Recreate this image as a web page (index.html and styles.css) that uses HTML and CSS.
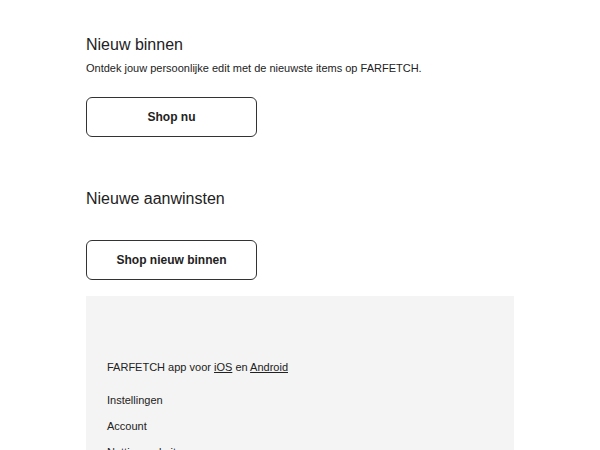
FILE: index.html
```html
<!DOCTYPE html>
<html>
<head>
  <link rel="stylesheet" href="styles.css">
</head>
<body>
  <div class="mail">
    <div class="block block-first">
      <h2 class="block-title">Nieuw binnen</h2>
      <p class="block-text">Ontdek jouw persoonlijke edit met de nieuwste items op FARFETCH.</p>
      <a class="shop-button" href="#">Shop nu</a>
    </div>

    <div class="block block-second">
      <h2 class="block-title">Nieuwe aanwinsten</h2>
      <a class="shop-button" href="#">Shop nieuw binnen</a>
    </div>

    <div class="footer">
      <p class="app-line">FARFETCH app voor <a href="#">iOS</a> en <a href="#">Android</a></p>
      <ul class="footer-links">
        <li><a href="#">Instellingen</a></li>
        <li><a href="#">Account</a></li>
        <li><a href="#">Nuttige websites</a></li>
        <li><a href="#">Contact</a></li>
      </ul>
    </div>
  </div>
</body>
</html>
```

FILE: styles.css
```css
body {
  margin: 0;
  background: #ffffff;
  font-family: 'Liberation Sans', Arial, sans-serif;
  color: #222222;
}

.mail {
  width: 428px;
  margin: 0 auto;
}

.block {
  display: flex;
  flex-direction: column;
  align-items: flex-start;
}

.block-first {
  padding-top: 35px;
}

.block-second {
  padding-top: 52px;
}

.block-title {
  margin: 0;
  font-size: 16px;
  line-height: 20px;
  font-weight: normal;
}

.block-text {
  margin: 5px 0 0;
  font-size: 11px;
  line-height: 16px;
}

.shop-button {
  display: flex;
  justify-content: center;
  align-items: center;
  box-sizing: border-box;
  width: 171px;
  height: 40px;
  margin-top: 21px;
  border: 1px solid #333333;
  border-radius: 6px;
  color: #222222;
  font-size: 12px;
  font-weight: bold;
  text-decoration: none;
}

.block-second .shop-button {
  margin-top: 31px;
}

/* Footer */
.footer {
  margin-top: 16px;
  background: #f4f4f4;
  padding: 63px 21px 30px;
  font-size: 11px;
  line-height: 16px;
}

.app-line {
  margin: 0;
}

.app-line a {
  color: #222222;
}

.footer-links {
  list-style: none;
  margin: 17px 0 0;
  padding: 0;
  display: flex;
  flex-direction: column;
  gap: 10px;
}

.footer-links a {
  color: #222222;
  text-decoration: none;
}
```
